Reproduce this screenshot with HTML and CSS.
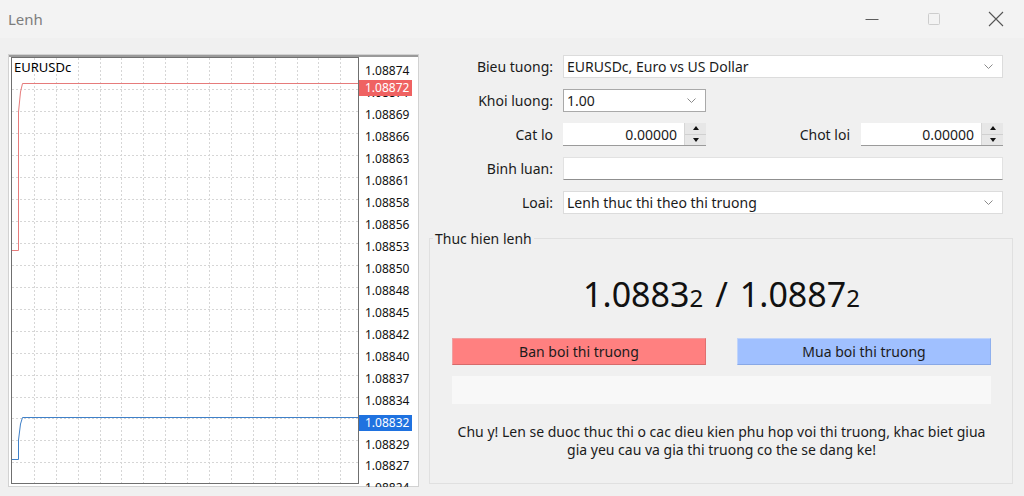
FILE: index.html
```html
<!DOCTYPE html>
<html lang="vi">
<head>
    <meta charset="UTF-8">
    <title>Lenh</title>
    <link rel="stylesheet" href="styles.css">
</head>
<body>
    <div class="window">
        <header class="titlebar">
            <span class="title">Lenh</span>
            <div class="win-controls">
                <span class="win-btn">
                    <svg width="14" height="14" viewBox="0 0 14 14"><path d="M0.5 7.5H13.5" stroke="#5c5c5c"/></svg>
                </span>
                <span class="win-btn">
                    <svg width="14" height="14" viewBox="0 0 14 14"><rect x="1.5" y="1.5" width="11" height="11" rx="1" fill="none" stroke="#cdcdcd"/></svg>
                </span>
                <span class="win-btn">
                    <svg width="16" height="16" viewBox="0 0 16 16"><path d="M1 1L15 15M15 1L1 15" stroke="#555" stroke-width="1.1"/></svg>
                </span>
            </div>
        </header>

        <main class="content">
            <div class="chart">
                <svg class="chart-svg" width="411" height="433" viewBox="8 54 411 433">
                    <rect x="8.5" y="54.5" width="410" height="432" fill="#fff" stroke="#d2d2d2"/>
                    <path d="M9 56H418" stroke="#9a9a9a" stroke-width="2"/>
                    <!-- grid -->
                    <path class="grid" d="M34.5 58V483M56.5 58V483M78.5 58V483M100.5 58V483M121.5 58V483M143.5 58V483M165.5 58V483M187.5 58V483M209.5 58V483M231.5 58V483M253.5 58V483M275.5 58V483M297.5 58V483M318.5 58V483M340.5 58V483"/>
                    <path class="grid" d="M12 89.5H358M12 111.5H358M12 133.5H358M12 155.5H358M12 177.5H358M12 199.5H358M12 221.5H358M12 243.5H358M12 265.5H358M12 287.5H358M12 309.5H358M12 331.5H358M12 353.5H358M12 375.5H358M12 397.5H358M12 418.5H358M12 440.5H358M12 462.5H358"/>
                    <rect x="11.5" y="57.5" width="347" height="426" fill="none" stroke="#6f6f6f"/>
                    <!-- ask / bid -->
                    <path d="M12 250.5H18.5V112L20.5 92L22.5 83.5H358" fill="none" stroke="#e67b7b"/>
                    <path d="M12 459.5H18.5V440L20.5 424L22.5 417.5H358" fill="none" stroke="#3f80c8"/>
                    <text class="sym" x="14" y="72">EURUSDc</text>
                    <g class="axis">
                        <text x="365" y="75.3">1.08874</text>
                        <text x="365" y="97.3">1.08871</text>
                        <text x="365" y="119.2">1.08869</text>
                        <text x="365" y="141.2">1.08866</text>
                        <text x="365" y="163.1">1.08863</text>
                        <text x="365" y="185">1.08861</text>
                        <text x="365" y="207">1.08858</text>
                        <text x="365" y="229">1.08856</text>
                        <text x="365" y="250.9">1.08853</text>
                        <text x="365" y="272.9">1.08850</text>
                        <text x="365" y="294.8">1.08848</text>
                        <text x="365" y="316.8">1.08845</text>
                        <text x="365" y="338.7">1.08842</text>
                        <text x="365" y="360.7">1.08840</text>
                        <text x="365" y="382.6">1.08837</text>
                        <text x="365" y="404.6">1.08834</text>
                        <text x="365" y="426.5">1.08832</text>
                        <text x="365" y="448.5">1.08829</text>
                        <text x="365" y="470.4">1.08827</text>
                        <text x="365" y="492.4">1.08824</text>
                    </g>
                    <rect x="359" y="80" width="53" height="16" fill="#ef6262"/>
                    <text class="axis badge" x="365" y="92.3">1.08872</text>
                    <rect x="359" y="415" width="53" height="16" fill="#1f72e0"/>
                    <text class="axis badge" x="365" y="427.3">1.08832</text>
                </svg>
            </div>

            <section class="order">
                <div class="fields">
                    <label class="lbl">Bieu tuong:</label>
                    <div class="combo">
                        <span>EURUSDc, Euro vs US Dollar</span>
                        <svg class="chev" width="9" height="5" viewBox="0 0 9 5"><path d="M0.5 0.5L4.5 4.5L8.5 0.5" fill="none" stroke="#8a8a8a"/></svg>
                    </div>

                    <label class="lbl">Khoi luong:</label>
                    <div class="cell">
                        <div class="combo combo-edit">
                            <span>1.00</span>
                            <svg class="chev" width="9" height="5" viewBox="0 0 9 5"><path d="M0.5 0.5L4.5 4.5L8.5 0.5" fill="none" stroke="#8a8a8a"/></svg>
                        </div>
                    </div>

                    <label class="lbl">Cat lo</label>
                    <div class="cell split">
                        <div class="spin">
                            <span class="spin-value">0.00000</span>
                            <span class="spin-btns">
                                <span class="spin-up"></span>
                                <span class="spin-down"></span>
                            </span>
                        </div>
                        <label class="lbl lbl-inline">Chot loi</label>
                        <div class="spin spin-right">
                            <span class="spin-value">0.00000</span>
                            <span class="spin-btns">
                                <span class="spin-up"></span>
                                <span class="spin-down"></span>
                            </span>
                        </div>
                    </div>

                    <label class="lbl">Binh luan:</label>
                    <div class="textbox"></div>

                    <label class="lbl">Loai:</label>
                    <div class="combo">
                        <span>Lenh thuc thi theo thi truong</span>
                        <svg class="chev" width="9" height="5" viewBox="0 0 9 5"><path d="M0.5 0.5L4.5 4.5L8.5 0.5" fill="none" stroke="#8a8a8a"/></svg>
                    </div>
                </div>

                <fieldset class="exec">
                    <legend>Thuc hien lenh</legend>
                    <div class="price">1.0883<span class="pip">2</span><span class="slash">/</span>1.0887<span class="pip">2</span></div>
                    <div class="actions">
                        <button class="btn btn-sell">Ban boi thi truong</button>
                        <button class="btn btn-buy">Mua boi thi truong</button>
                    </div>
                    <div class="status"></div>
                    <p class="note">Chu y! Len se duoc thuc thi o cac dieu kien phu hop voi thi truong, khac biet giua<br>gia yeu cau va gia thi truong co the se dang ke!</p>
                </fieldset>
            </section>
        </main>
    </div>
</body>
</html>
```

FILE: styles.css
```css
html, body {
    margin: 0;
    padding: 0;
    background-color: #f0f0f0;
    font-family: "Noto Sans", "Open Sans", sans-serif;
    color: #1b1b1b;
}

.window {
    width: 1024px;
    height: 496px;
    overflow: hidden;
}

.titlebar {
    height: 38px;
    display: flex;
    align-items: center;
    justify-content: space-between;
    background-color: #f3f3f3;
}

.title {
    margin-left: 8px;
    font-size: 15px;
    color: #7d7d7d;
}

.win-controls {
    display: flex;
    margin-right: -3px;
}

.win-btn {
    width: 62px;
    height: 38px;
    display: flex;
    align-items: center;
    justify-content: center;
}

.content {
    display: flex;
    padding: 16px 0 0 8px;
}

.chart {
    width: 411px;
    height: 433px;
}

.chart-svg {
    display: block;
}

.grid {
    stroke: #d6d6d6;
    stroke-dasharray: 2 2;
    fill: none;
}

.sym {
    font-size: 13px;
    fill: #000;
}

.axis text, .axis.badge {
    font-size: 12px;
    fill: #111;
}

.axis.badge {
    fill: #fff;
}

.order {
    width: 584px;
    margin-left: 10px;
}

.fields {
    display: grid;
    grid-template-columns: 124px 1fr;
    grid-auto-rows: 23px;
    column-gap: 10px;
    row-gap: 11px;
    margin: 1px 10px 0 0;
    font-size: 14px;
}

.lbl {
    display: flex;
    align-items: center;
    justify-content: flex-end;
    white-space: nowrap;
}

.lbl-inline {
    margin-left: auto;
    margin-right: 11px;
}

.cell {
    display: flex;
}

.combo {
    display: flex;
    align-items: center;
    justify-content: space-between;
    padding: 0 9px 0 3px;
    background-color: #fff;
    border: 1px solid #dcdcdc;
}

.combo-edit {
    width: 143px;
    box-sizing: border-box;
    border-color: #a9a9a9;
}

.spin {
    width: 143px;
    display: flex;
    background-color: #fff;
    border-bottom: 1px solid #9b9b9b;
}

.spin-right {
    width: 142px;
}

.spin-value {
    flex: 1;
    display: flex;
    align-items: center;
    justify-content: flex-end;
    padding-right: 7px;
}

.spin-btns {
    width: 21px;
    display: flex;
    flex-direction: column;
    background-color: #e7e7e7;
    border-left: 1px solid #d6d6d6;
}

.spin-up, .spin-down {
    flex: 1;
    display: flex;
    align-items: center;
    justify-content: center;
}

.spin-up {
    border-bottom: 1px solid #d0d0d0;
}

.spin-up::after {
    content: "";
    border-left: 3px solid transparent;
    border-right: 3px solid transparent;
    border-bottom: 4px solid #111;
}

.spin-down::after {
    content: "";
    border-left: 3px solid transparent;
    border-right: 3px solid transparent;
    border-top: 4px solid #111;
}

.textbox {
    background-color: #fff;
    border: 1px solid #e2e2e2;
    border-bottom-color: #8f8f8f;
}

.exec {
    margin: 15px 0 0;
    padding: 0 21px 24px 22px;
    border: 1px solid #e0e0e0;
    background-color: #f0f0f0;
    font-size: 14px;
}

.exec legend {
    margin-left: -19px;
    padding: 0 2px;
}

.price {
    margin-top: 26px;
    text-align: center;
    font-size: 34px;
    line-height: 40px;
    color: #111;
}

.pip {
    font-size: 24px;
}

.slash {
    margin: 0 12px;
}

.actions {
    display: flex;
    justify-content: space-between;
    margin-top: 20px;
}

.btn {
    width: 254px;
    height: 27px;
    font-family: inherit;
    font-size: 14px;
    color: #1b1b1b;
    border: 1px solid;
    padding: 0;
}

.btn-sell {
    background-color: #ff8080;
    border-color: #f0a0a0 #e07070 #d66a6a #f0a0a0;
}

.btn-buy {
    background-color: #a0c0ff;
    border-color: #c0d4fa #8fb0ee #88a8e6 #c0d4fa;
}

.status {
    height: 28px;
    margin-top: 11px;
    background-color: #f8f8f8;
}

.note {
    margin: 19px -20px 0;
    text-align: center;
    line-height: 18px;
    white-space: nowrap;
}
```
